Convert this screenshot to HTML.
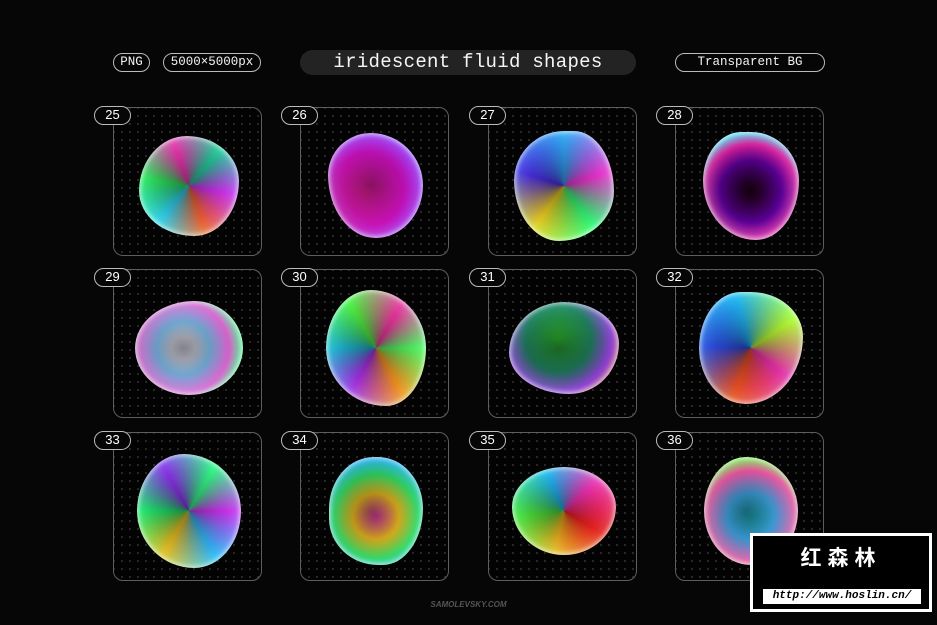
<!DOCTYPE html>
<html><head><meta charset="utf-8"><style>
*{margin:0;padding:0;box-sizing:border-box}
body{width:937px;height:625px;background:#060606;position:relative;overflow:hidden;font-family:"Liberation Mono",monospace;color:#eee}
.pill{position:absolute;border:1.5px solid #bbb;border-radius:12px;font-size:12.5px;text-align:center;line-height:16px;height:19px;color:#f2f2f2}
.title{position:absolute;left:300px;top:50px;width:336px;height:25px;background:#232323;border-radius:13px;font-size:19px;text-align:center;line-height:25px;color:#f5f5f5;letter-spacing:.3px}
.card{position:absolute;width:149px;height:149px;border:1.5px solid #5e5e5e;border-radius:10px;background:#030303;background-image:radial-gradient(#333 0.8px,transparent 1px);background-size:8px 8px;background-position:4px 4px;overflow:hidden}
.num{position:absolute;width:37px;height:19px;border:1.5px solid #bbb;border-radius:10px;background:#060606;font-family:"Liberation Sans",sans-serif;font-size:13px;text-align:center;line-height:16px;color:#fff}
.blob{position:absolute}
</style></head><body>
<div class="pill" style="left:113px;top:53px;width:37px">PNG</div>
<div class="pill" style="left:163px;top:53px;width:98px">5000×5000px</div>
<div class="title">iridescent fluid shapes</div>
<div class="pill" style="left:675px;top:53px;width:150px">Transparent BG</div>

<div id="g"></div>
<script>
const xs=[113,300,488,675],ys=[107,269,432];
const shade="radial-gradient(ellipse at 45% 50%,rgba(0,0,0,.45),rgba(0,0,0,.15) 45%,transparent 70%),";
const blobs=[
["conic-gradient(from 40deg,#2c9,#d3f,#f63,#3df,#3f6,#f3b,#2c9)","48% 52% 45% 55%/55% 45% 55% 45%",100,100],
["radial-gradient(circle at 40% 55%,#f2a,#d1c 45%,#a3f 70%,#6ee 90%)","45% 55% 50% 50%/40% 50% 50% 60%",95,105],
["conic-gradient(from 0deg,#3af,#f3d,#3f7,#fd2,#53f,#3af)","50% 40% 55% 45%/45% 55% 45% 55%",100,110],
["radial-gradient(circle at 50% 55%,#201,#60a 40%,#e2a 62%,#4ef 80%,#ff6)","40% 50% 45% 55%/45% 45% 55% 55%",96,108],
["radial-gradient(circle at 45% 50%,#eef 15%,#8cf 35%,#e6d 60%,#4f8 80%,#a4f)","55% 45% 50% 50%/50% 50% 50% 50%",108,94],
["conic-gradient(from 90deg,#5f6,#f92,#b3f,#2ce,#5f4,#f3a,#5f6)","45% 55% 40% 60%/50% 50% 50% 50%",100,116],
["radial-gradient(circle at 45% 40%,#3c3,#286 40%,#93d 65%,#f64 85%)","50% 50% 45% 55%/55% 45% 55% 45%",110,92],
["conic-gradient(from 200deg,#f52,#35f,#2bf,#bf3,#f3b,#f52)","40% 50% 55% 45%/50% 40% 60% 50%",104,112],
["conic-gradient(from 30deg,#3f8,#d3f,#3bf,#fc2,#2f7,#93f,#3f8)","45% 55% 45% 55%/50% 50% 50% 50%",104,114],
["radial-gradient(circle at 50% 55%,#f4b,#fc2 30%,#3d6 55%,#2ae 75%,#a3f)","50% 50% 45% 55%/50% 50% 55% 45%",94,108],
["conic-gradient(from 120deg,#f22,#fb2,#5f4,#2bf,#f3b,#f22)","50% 50% 50% 50%/45% 45% 55% 55%",104,88],
["radial-gradient(circle at 50% 55%,#2bc,#4bf 30%,#f5a 60%,#7f4 80%,#fc4)","45% 55% 50% 50%/50% 50% 50% 50%",94,108]];
let h="";
let i=0;
for(const y of ys)for(const x of xs){const b=blobs[i];
h+=`<div class="card" style="left:${x}px;top:${y}px"><div class="blob" style="left:${(149-b[2])/2}px;top:${(149-b[3])/2+3}px;width:${b[2]}px;height:${b[3]}px;border-radius:${b[1]};background:${shade}${b[0]};box-shadow:inset 0 0 4px 2px rgba(255,255,255,.55),inset 0 0 14px 4px rgba(120,255,200,.25)"></div></div>`;
h+=`<div class="num" style="left:${x-19}px;top:${y-1}px">${25+i}</div>`;i++;}
document.getElementById('g').innerHTML=h;
</script>
<div style="position:absolute;left:0;width:937px;top:600px;text-align:center;font-family:'Liberation Sans',sans-serif;font-size:8px;font-weight:bold;color:#555;font-style:italic">SAMOLEVSKY.COM</div>
<div style="position:absolute;left:750px;top:533px;width:182px;height:79px;background:#fff;padding:3px">
<div style="width:100%;height:100%;background:#000;position:relative">
<div style="position:absolute;left:0;width:100%;top:8px;text-align:center;font-family:'Noto Sans CJK SC',sans-serif;font-weight:bold;font-size:21px;color:#fff;letter-spacing:6px;line-height:26px">红森林</div>
<div style="position:absolute;left:10px;right:8px;top:53px;height:15px;background:#fff;color:#000;font-family:'Liberation Mono',monospace;font-style:italic;font-weight:bold;font-size:11px;line-height:15px;text-align:center">http://www.hoslin.cn/</div>
</div></div>
</body></html>
